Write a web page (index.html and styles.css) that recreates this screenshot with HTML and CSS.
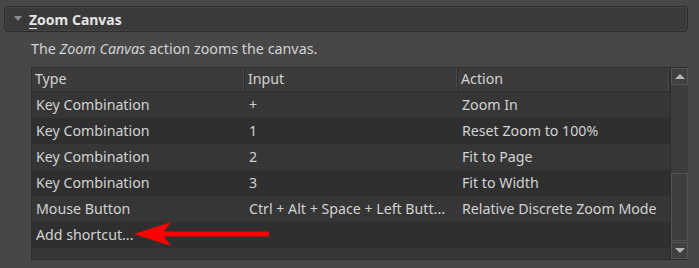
FILE: index.html
```html
<!DOCTYPE html>
<html lang="en">
<head>
  <meta charset="UTF-8" />
  <title>Zoom Canvas</title>
  <link rel="stylesheet" href="styles.css">
</head>
<body>

  <div class="section">
    <div class="section-header">
      <span class="caret"></span>
      <span class="section-title"><u>Z</u>oom Canvas</span>
    </div>

    <div class="section-body">
      <p class="desc">The <em>Zoom Canvas</em> action zooms the canvas.</p>

      <div class="shortcuts">
        <div class="grid">
          <div class="row head">
            <div class="cell">Type</div>
            <div class="cell">Input</div>
            <div class="cell">Action</div>
          </div>
          <div class="row">
            <div class="cell">Key Combination</div>
            <div class="cell">+</div>
            <div class="cell">Zoom In</div>
          </div>
          <div class="row alt">
            <div class="cell">Key Combination</div>
            <div class="cell">1</div>
            <div class="cell">Reset Zoom to 100%</div>
          </div>
          <div class="row">
            <div class="cell">Key Combination</div>
            <div class="cell">2</div>
            <div class="cell">Fit to Page</div>
          </div>
          <div class="row alt">
            <div class="cell">Key Combination</div>
            <div class="cell">3</div>
            <div class="cell">Fit to Width</div>
          </div>
          <div class="row">
            <div class="cell">Mouse Button</div>
            <div class="cell">Ctrl + Alt + Space + Left Butt...</div>
            <div class="cell">Relative Discrete Zoom Mode</div>
          </div>
          <div class="row alt add-row">
            <div class="cell">Add shortcut...</div>
            <div class="cell"></div>
            <div class="cell"></div>
            <svg class="pointer" width="140" height="30" viewBox="0 0 140 30">
              <polygon points="0,12 37,0 30,9.5 135,9.5 135,14.5 30,14.5 37,24" fill="#ff0000"/>
            </svg>
          </div>
        </div>

        <div class="scrollbar">
          <div class="sb-btn"><span class="tri-up"></span></div>
          <div class="sb-track">
            <div class="sb-thumb"></div>
          </div>
          <div class="sb-btn"><span class="tri-down"></span></div>
        </div>
      </div>
    </div>
  </div>

</body>
</html>
```

FILE: styles.css
```css
body {
  margin: 0;
  background-color: #474747;
  font-family: 'Noto Sans', 'Open Sans', sans-serif;
  font-size: 14px;
  color: #d2d2d2;
  height: 268px;
  overflow: hidden;
}

.section {
  padding: 6px 11px 0 4px;
}

.section-header {
  display: flex;
  align-items: center;
  height: 24px;
  background: #3a3a3a;
  border: 1px solid #2c2c2c;
  border-radius: 4px;
  box-shadow: inset 0 0 0 1px #444;
}

.caret {
  width: 0;
  height: 0;
  margin: 0 7px 2px 9px;
  border-left: 4px solid transparent;
  border-right: 4px solid transparent;
  border-top: 5px solid #8a8a8a;
}

.section-title {
  font-weight: bold;
  font-size: 14px;
  color: #e4e4e4;
}

.section-title u {
  text-decoration-thickness: 1px;
  text-underline-offset: 3px;
}

.section-body {
  padding-left: 27px;
}

.desc {
  margin: 0;
  height: 35px;
  line-height: 34px;
  font-size: 14.3px;
}

.shortcuts {
  display: flex;
  height: 191px;
  background: #363636;
  border: 1px solid #2d2d2d;
  border-right: none;
}

.grid {
  flex: 1;
  display: flex;
  flex-direction: column;
}

.row {
  display: grid;
  grid-template-columns: 213px 213px 1fr;
  height: 26px;
  align-items: center;
  position: relative;
}

.row.alt {
  background: #2f2f2f;
}

.row.head {
  height: 23px;
  background: #3b3b3b;
  border-bottom: 1px solid #2e2e2e;
}

.row.head .cell {
  padding: 0 0 0 3px;
  height: 23px;
  line-height: 21px;
  border-right: 1px solid #2c2c2c;
  box-shadow: inset -1px 0 0 #4a4a4a;
}

.cell {
  padding: 0 0 2px 4px;
  white-space: nowrap;
  overflow: hidden;
  font-size: 14.2px;
}

.pointer {
  position: absolute;
  left: 102px;
  top: 0;
}

.scrollbar {
  width: 17px;
  display: flex;
  flex-direction: column;
  background: #3c3c3c;
  border-left: 1px solid #2e2e2e;
}

.sb-btn {
  height: 15px;
  border: 1px solid #565656;
  background: #404040;
  display: flex;
  align-items: center;
  justify-content: center;
}

.tri-up {
  width: 0;
  height: 0;
  border-left: 5px solid transparent;
  border-right: 5px solid transparent;
  border-bottom: 5px solid #b4b4b4;
}

.tri-down {
  width: 0;
  height: 0;
  border-left: 5px solid transparent;
  border-right: 5px solid transparent;
  border-top: 5px solid #b4b4b4;
}

.sb-track {
  flex: 1;
  display: flex;
  flex-direction: column;
  justify-content: flex-end;
  padding-bottom: 1px;
}

.sb-thumb {
  height: 66px;
  border: 1px solid #525252;
  background: #3e3e3e;
}
```
